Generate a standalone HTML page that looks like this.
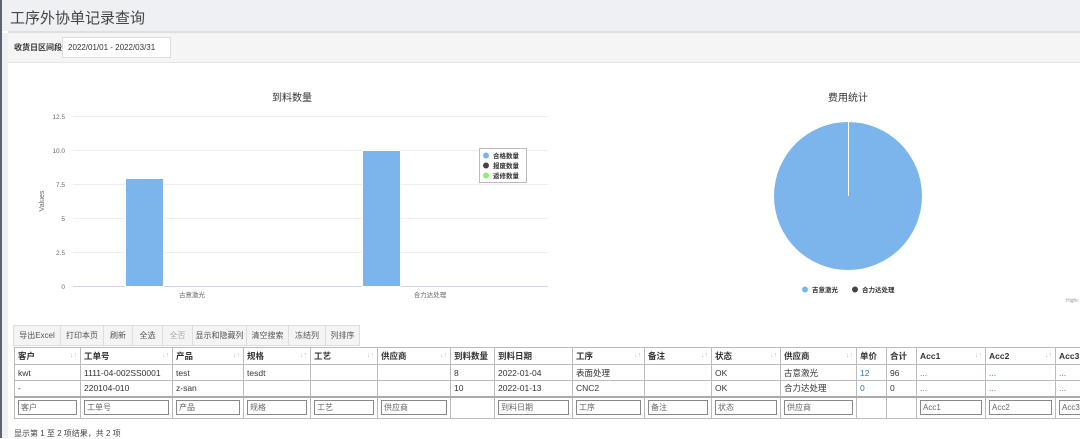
<!DOCTYPE html>
<html><head><meta charset="utf-8"><style>
*{margin:0;padding:0;box-sizing:border-box}
body{width:1080px;height:438px;overflow:hidden;background:#fff;font-family:"Liberation Sans","Noto Sans CJK SC",sans-serif;color:#333;position:relative}
.a{position:absolute}
.btn{position:absolute;top:325px;height:21px;border:1px solid #ddd;background:#f4f4f4;font-size:8px;line-height:19px;text-align:center;color:#555;white-space:nowrap;overflow:hidden}
table{position:absolute;left:14px;top:347px;width:1081px;border-collapse:collapse;table-layout:fixed;font-size:8.5px}
td,th{border:1px solid #bbb;padding:0 3px;height:16px;text-align:left;white-space:nowrap;overflow:hidden;position:relative}
th{font-weight:bold;height:17px}
th i{position:absolute;right:3px;top:4px;font-style:normal;color:#bbb;font-size:7px}
tr.f td{height:22px;border-top:2px solid #aaa}
tr.f span{display:block;border:1px solid #888;height:15px;font-size:8px;line-height:13px;padding-left:2px;color:#666}
a{color:#2a7ac0}
</style></head><body>
<div class="a" style="left:0;top:0;width:1080px;height:31px;background:#eef0f4"></div>
<div class="a" style="left:0;top:0;width:2px;height:438px;background:#5c6470"></div>
<div class="a" style="left:10px;top:7px;font-size:15px;color:#444">工序外协单记录查询</div>
<div class="a" style="left:8px;top:31px;width:1072px;height:2px;background:#dcdfe4"></div>
<div class="a" style="left:2px;top:33px;width:6px;height:405px;background:#eef0f4"></div>
<div class="a" style="left:8px;top:33px;width:1072px;height:30px;background:#f5f5f5;border-bottom:1px solid #e5e5e5"></div>
<div class="a" style="left:14px;top:42px;font-size:8px;font-weight:bold">收货日区间段</div>
<div class="a" style="left:62px;top:37px;width:109px;height:21px;border:1px solid #ddd;background:#fff;font-size:8px;line-height:19px;padding-left:5px">2022/01/01 - 2022/03/31</div>

<svg class="a" style="left:0;top:0" width="1080" height="320">
<text x="292" y="101" font-size="10" text-anchor="middle" fill="#333" font-family="Liberation Sans,Noto Sans CJK SC,sans-serif">到料数量</text>
<g stroke="#eee" stroke-width="1">
<line x1="73" y1="116.5" x2="548" y2="116.5"/><line x1="73" y1="150.5" x2="548" y2="150.5"/><line x1="73" y1="184.5" x2="548" y2="184.5"/><line x1="73" y1="218.5" x2="548" y2="218.5"/><line x1="73" y1="252.5" x2="548" y2="252.5"/></g>
<line x1="73" y1="286.5" x2="548" y2="286.5" stroke="#ccd6eb"/>
<g font-size="6.5" fill="#666" text-anchor="end" font-family="Liberation Sans,sans-serif">
<text x="65" y="119">12.5</text><text x="65" y="153">10.0</text><text x="65" y="187">7.5</text><text x="65" y="221">5</text><text x="65" y="255">2.5</text><text x="65" y="289">0</text></g>
<text x="44" y="201" font-size="7" fill="#666" transform="rotate(-90 44 201)" text-anchor="middle" font-family="Liberation Sans,sans-serif">Values</text>
<rect x="125.5" y="178.5" width="38" height="108" fill="#7cb5ec" stroke="#fff"/>
<rect x="362.5" y="150.5" width="38" height="136" fill="#7cb5ec" stroke="#fff"/>
<g font-size="6.5" fill="#666" text-anchor="middle" font-family="Liberation Sans,Noto Sans CJK SC,sans-serif"><text x="192" y="297">古意激光</text><text x="430" y="297">合力达处理</text></g>
<rect x="479.5" y="148.5" width="47" height="34" fill="#fff" stroke="#bbb"/>
<circle cx="486" cy="155.5" r="3" fill="#7cb5ec"/><circle cx="486" cy="165.5" r="3" fill="#434348"/><circle cx="486" cy="175.5" r="3" fill="#90ed7d"/>
<g font-size="6.5" font-weight="bold" fill="#333" font-family="Liberation Sans,Noto Sans CJK SC,sans-serif"><text x="493" y="158">合格数量</text><text x="493" y="168">报废数量</text><text x="493" y="178">返修数量</text></g>
<text x="848" y="101" font-size="10" text-anchor="middle" fill="#333" font-family="Liberation Sans,Noto Sans CJK SC,sans-serif">费用统计</text>
<circle cx="848" cy="196" r="74" fill="#7cb5ec"/>
<line x1="848.5" y1="122" x2="848.5" y2="196" stroke="#fff" stroke-width="1"/>
<circle cx="805" cy="289.5" r="3" fill="#7cb5ec"/><circle cx="855" cy="289.5" r="3" fill="#434348"/>
<g font-size="6.5" font-weight="bold" fill="#333" font-family="Liberation Sans,Noto Sans CJK SC,sans-serif"><text x="812" y="292">吉意激光</text><text x="862" y="292">合力达处理</text></g>
<text x="1066" y="302" font-size="5" fill="#999" font-family="Liberation Sans,sans-serif">Highc</text>
</svg>

<div class="btn" style="left:13px;width:48px">导出Excel</div>
<div class="btn" style="left:60px;width:44px">打印本页</div>
<div class="btn" style="left:103px;width:30px">刷新</div>
<div class="btn" style="left:132px;width:31px">全选</div>
<div class="btn" style="left:162px;width:31px;color:#aaa">全否</div>
<div class="btn" style="left:192px;width:55px">显示和隐藏列</div>
<div class="btn" style="left:246px;width:43px">清空搜索</div>
<div class="btn" style="left:288px;width:38px">冻结列</div>
<div class="btn" style="left:325px;width:35px">列排序</div>

<table>
<colgroup><col style="width:66px"><col style="width:92px"><col style="width:71px"><col style="width:67px"><col style="width:67px"><col style="width:73px"><col style="width:44px"><col style="width:78px"><col style="width:72px"><col style="width:67px"><col style="width:69px"><col style="width:76px"><col style="width:30px"><col style="width:30px"><col style="width:69px"><col style="width:70px"><col style="width:40px"></colgroup>
<tr><th>客户<i>↓↑</i></th><th>工单号<i>↓↑</i></th><th>产品<i>↓↑</i></th><th>规格<i>↓↑</i></th><th>工艺<i>↓↑</i></th><th>供应商<i>↓↑</i></th><th>到料数量</th><th>到料日期</th><th>工序<i>↓↑</i></th><th>备注<i>↓↑</i></th><th>状态<i>↓↑</i></th><th>供应商<i>↓↑</i></th><th>单价</th><th>合计</th><th>Acc1<i>↓↑</i></th><th>Acc2<i>↓↑</i></th><th>Acc3</th></tr>
<tr><td>kwt</td><td>1111-04-002SS0001</td><td>test</td><td>tesdt</td><td></td><td></td><td>8</td><td>2022-01-04</td><td>表面处理</td><td></td><td>OK</td><td>古意激光</td><td><a>12</a></td><td>96</td><td><a>...</a></td><td><a>...</a></td><td><a>...</a></td></tr>
<tr><td>-</td><td>220104-010</td><td>z-san</td><td></td><td></td><td></td><td>10</td><td>2022-01-13</td><td>CNC2</td><td></td><td>OK</td><td>合力达处理</td><td><a>0</a></td><td>0</td><td><a>...</a></td><td><a>...</a></td><td><a>...</a></td></tr>
<tr class="f"><td><span>客户</span></td><td><span>工单号</span></td><td><span>产品</span></td><td><span>规格</span></td><td><span>工艺</span></td><td><span>供应商</span></td><td></td><td><span>到料日期</span></td><td><span>工序</span></td><td><span>备注</span></td><td><span>状态</span></td><td><span>供应商</span></td><td></td><td></td><td><span>Acc1</span></td><td><span>Acc2</span></td><td><span>Acc3</span></td></tr>
</table>
<div class="a" style="left:14px;top:428px;font-size:8px;color:#444">显示第 1 至 2 项结果，共 2 项</div>
</body></html>
